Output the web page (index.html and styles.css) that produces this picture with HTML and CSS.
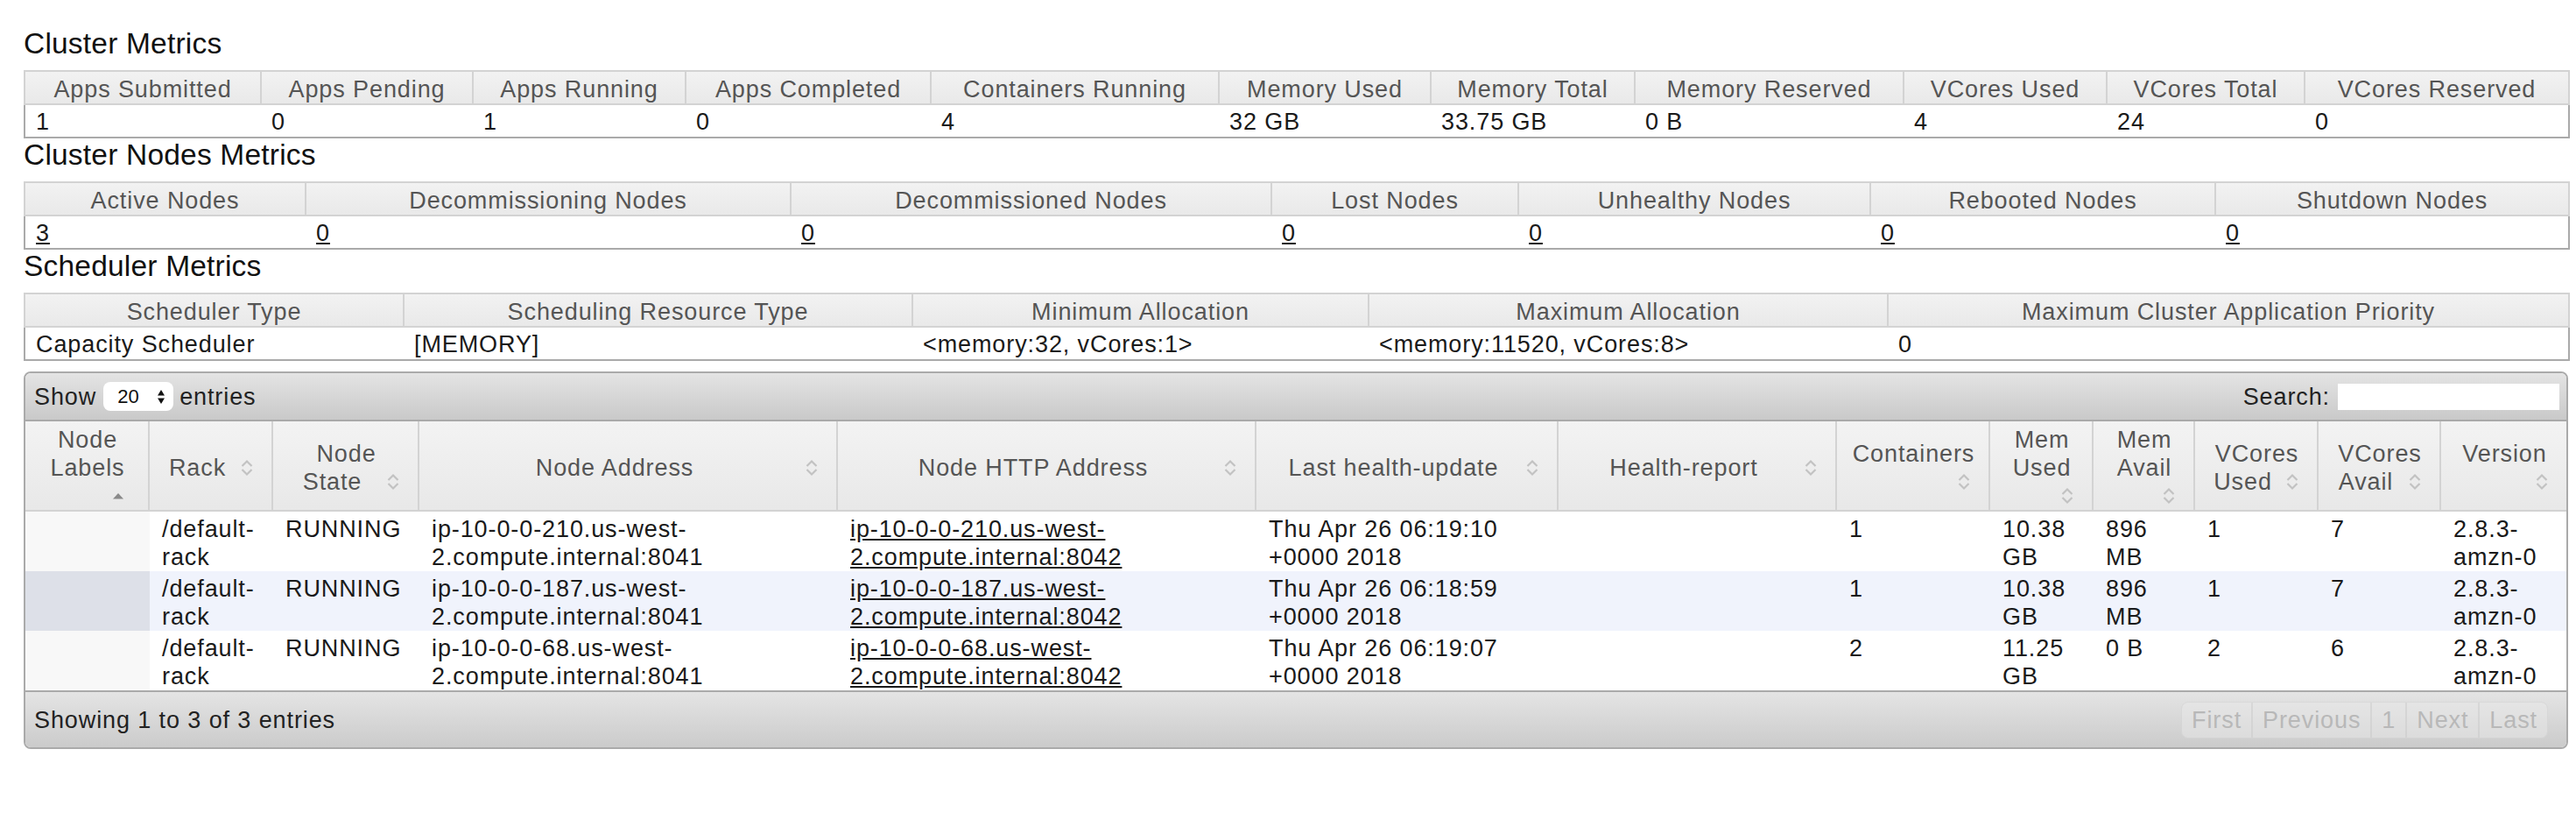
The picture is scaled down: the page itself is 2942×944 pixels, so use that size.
FILE: index.html
```html
<!DOCTYPE html>
<html lang="en">
<head>
<meta charset="utf-8">
<title>Nodes of the cluster</title>
<link rel="stylesheet" href="styles.css">
</head>
<body>
<svg class="defs" width="0" height="0" aria-hidden="true">
  <symbol id="sb" viewBox="0 0 32 32">
    <polyline points="10.5,14 16,8.5 21.5,14" fill="none" stroke="#c2c2c2" stroke-width="2.2"/>
    <polyline points="10.5,18 16,23.5 21.5,18" fill="none" stroke="#c2c2c2" stroke-width="2.2"/>
  </symbol>
  <symbol id="sa" viewBox="0 0 32 32">
    <polygon points="4,19.5 10,13 16,19.5" fill="#8a8a8a"/>
  </symbol>
  <symbol id="ud" viewBox="0 0 10 18">
    <polygon points="1,7.5 5,1 9,7.5" fill="#111"/>
    <polygon points="1,10.5 5,17 9,10.5" fill="#111"/>
  </symbol>
</svg>
<div class="page">
  <h2 class="section">Cluster Metrics</h2>
  <table class="info t1">
    <colgroup><col><col><col><col><col><col><col><col><col><col><col></colgroup>
    <thead>
      <tr><th>Apps Submitted</th><th>Apps Pending</th><th>Apps Running</th><th>Apps Completed</th><th>Containers Running</th><th>Memory Used</th><th>Memory Total</th><th>Memory Reserved</th><th>VCores Used</th><th>VCores Total</th><th>VCores Reserved</th></tr>
    </thead>
    <tbody>
      <tr><td>1</td><td>0</td><td>1</td><td>0</td><td>4</td><td>32 GB</td><td>33.75 GB</td><td>0 B</td><td>4</td><td>24</td><td>0</td></tr>
    </tbody>
  </table>

  <h2 class="section">Cluster Nodes Metrics</h2>
  <table class="info t2">
    <colgroup><col><col><col><col><col><col><col></colgroup>
    <thead>
      <tr><th>Active Nodes</th><th>Decommissioning Nodes</th><th>Decommissioned Nodes</th><th>Lost Nodes</th><th>Unhealthy Nodes</th><th>Rebooted Nodes</th><th>Shutdown Nodes</th></tr>
    </thead>
    <tbody>
      <tr><td><a href="#">3</a></td><td><a href="#">0</a></td><td><a href="#">0</a></td><td><a href="#">0</a></td><td><a href="#">0</a></td><td><a href="#">0</a></td><td><a href="#">0</a></td></tr>
    </tbody>
  </table>

  <h2 class="section">Scheduler Metrics</h2>
  <table class="info t3">
    <colgroup><col><col><col><col><col></colgroup>
    <thead>
      <tr><th>Scheduler Type</th><th>Scheduling Resource Type</th><th>Minimum Allocation</th><th>Maximum Allocation</th><th>Maximum Cluster Application Priority</th></tr>
    </thead>
    <tbody>
      <tr><td>Capacity Scheduler</td><td>[MEMORY]</td><td>&lt;memory:32, vCores:1&gt;</td><td>&lt;memory:11520, vCores:8&gt;</td><td>0</td></tr>
    </tbody>
  </table>

  <div class="dtw">
    <div class="dt-top">
      <div class="len">Show<span class="lenbox"><select aria-label="entries"><option>20</option></select><svg class="ud"><use href="#ud"/></svg></span>entries</div>
      <div class="search">Search:<input type="text" aria-label="Search"></div>
    </div>
    <table class="dt">
      <colgroup><col><col><col><col><col><col><col><col><col><col><col><col><col></colgroup>
      <thead>
        <tr>
          <th>Node<br>Labels<svg class="sort blk"><use href="#sa"/></svg></th>
          <th>Rack<svg class="sort"><use href="#sb"/></svg></th>
          <th>Node<br>State<svg class="sort"><use href="#sb"/></svg></th>
          <th>Node Address<svg class="sort"><use href="#sb"/></svg></th>
          <th>Node HTTP Address<svg class="sort"><use href="#sb"/></svg></th>
          <th>Last health-update<svg class="sort"><use href="#sb"/></svg></th>
          <th>Health-report<svg class="sort"><use href="#sb"/></svg></th>
          <th>Containers<svg class="sort blk"><use href="#sb"/></svg></th>
          <th>Mem<br>Used<svg class="sort blk"><use href="#sb"/></svg></th>
          <th>Mem<br>Avail<svg class="sort blk"><use href="#sb"/></svg></th>
          <th>VCores<br>Used<svg class="sort"><use href="#sb"/></svg></th>
          <th>VCores<br>Avail<svg class="sort"><use href="#sb"/></svg></th>
          <th>Version<svg class="sort blk"><use href="#sb"/></svg></th>
        </tr>
      </thead>
      <tbody>
        <tr class="odd">
          <td class="s1"></td><td>/default-<br>rack</td><td>RUNNING</td>
          <td>ip-10-0-0-210.us-west-<br>2.compute.internal:8041</td>
          <td><a href="#">ip-10-0-0-210.us-west-<br>2.compute.internal:8042</a></td>
          <td>Thu Apr 26 06:19:10<br>+0000 2018</td><td></td>
          <td>1</td><td>10.38<br>GB</td><td>896<br>MB</td><td>1</td><td>7</td><td>2.8.3-<br>amzn-0</td>
        </tr>
        <tr class="even">
          <td class="s1"></td><td>/default-<br>rack</td><td>RUNNING</td>
          <td>ip-10-0-0-187.us-west-<br>2.compute.internal:8041</td>
          <td><a href="#">ip-10-0-0-187.us-west-<br>2.compute.internal:8042</a></td>
          <td>Thu Apr 26 06:18:59<br>+0000 2018</td><td></td>
          <td>1</td><td>10.38<br>GB</td><td>896<br>MB</td><td>1</td><td>7</td><td>2.8.3-<br>amzn-0</td>
        </tr>
        <tr class="odd">
          <td class="s1"></td><td>/default-<br>rack</td><td>RUNNING</td>
          <td>ip-10-0-0-68.us-west-<br>2.compute.internal:8041</td>
          <td><a href="#">ip-10-0-0-68.us-west-<br>2.compute.internal:8042</a></td>
          <td>Thu Apr 26 06:19:07<br>+0000 2018</td><td></td>
          <td>2</td><td>11.25<br>GB</td><td>0 B</td><td>2</td><td>6</td><td>2.8.3-<br>amzn-0</td>
        </tr>
      </tbody>
    </table>
    <div class="dt-bot">
      <div class="info-text">Showing 1 to 3 of 3 entries</div>
      <div class="pg"><span>First</span><span>Previous</span><span>1</span><span>Next</span><span>Last</span></div>
    </div>
  </div>
</div>
</body>
</html>
```
FILE: styles.css
```css
* { box-sizing: border-box; }
html, body { margin: 0; padding: 0; background: #fff; }
body {
  font-family: "Liberation Sans", Arial, Helvetica, sans-serif;
  font-size: 27px;
  letter-spacing: 0.9px;
  line-height: 32px;
  color: #1a1a1a;
}
.defs { position: absolute; width: 0; height: 0; overflow: hidden; }
.page { padding: 31px 9px 0 27px; }
.section {
  font-size: 33.5px;
  letter-spacing: 0.2px;
  line-height: 38px;
  font-weight: normal;
  color: #111;
  margin: 0 0 11px;
}
a { color: inherit; text-decoration: underline; }

/* metric tables */
.info {
  width: 100%;
  table-layout: fixed;
  border-collapse: collapse;
  border: 2px solid #aaa;
}
.info th {
  font-weight: normal;
  color: #555;
  text-align: center;
  white-space: nowrap;
  padding: 4px 12px 0;
  border: 2px solid #d3d3d3;
  background: linear-gradient(#f2f2f2, #e9e9e9);
}
.info td {
  text-align: left;
  white-space: nowrap;
  padding: 3px 12px 1px;
}
.t1 col:nth-child(1) { width: 270px; }
.t1 col:nth-child(2) { width: 242px; }
.t1 col:nth-child(3) { width: 243px; }
.t1 col:nth-child(4) { width: 280px; }
.t1 col:nth-child(5) { width: 329px; }
.t1 col:nth-child(6) { width: 242px; }
.t1 col:nth-child(7) { width: 233px; }
.t1 col:nth-child(8) { width: 307px; }
.t1 col:nth-child(9) { width: 232px; }
.t1 col:nth-child(10) { width: 226px; }
.t1 col:nth-child(11) { width: 302px; }

.t2 col:nth-child(1) { width: 321px; }
.t2 col:nth-child(2) { width: 554px; }
.t2 col:nth-child(3) { width: 549px; }
.t2 col:nth-child(4) { width: 282px; }
.t2 col:nth-child(5) { width: 402px; }
.t2 col:nth-child(6) { width: 394px; }
.t2 col:nth-child(7) { width: 404px; }

.t3 col:nth-child(1) { width: 433px; }
.t3 col:nth-child(2) { width: 581px; }
.t3 col:nth-child(3) { width: 521px; }
.t3 col:nth-child(4) { width: 593px; }
.t3 col:nth-child(5) { width: 778px; }

/* data table wrapper */
.dtw {
  margin-top: 12px;
  border: 2px solid #aaa;
  border-radius: 8px;
  overflow: hidden;
}
.dt-top {
  height: 55px;
  border-bottom: 2px solid #aaa;
  background: linear-gradient(#e4e4e4, #c9c9c9);
  display: flex;
  align-items: center;
  justify-content: space-between;
  padding: 0 8px 0 10px;
  color: #222;
}
.len { display: flex; align-items: center; }
.lenbox {
  display: inline-flex;
  align-items: center;
  justify-content: space-between;
  width: 80px;
  height: 33px;
  background: #fff;
  border-radius: 8px;
  margin: 0 7px 0 8px;
  padding: 0 9px 0 16px;
}
.lenbox select {
  appearance: none;
  -webkit-appearance: none;
  border: 0;
  background: transparent;
  font-family: "Liberation Sans", Arial, sans-serif;
  font-size: 22px;
  color: #111;
  padding: 0;
  margin: 0;
  width: 30px;
  outline: none;
}
.ud { width: 10px; height: 18px; display: block; }
.search { display: flex; align-items: center; }
.search input {
  width: 253px;
  height: 30px;
  margin-left: 9px;
  border: 0;
  background: #fff;
  padding: 0 6px;
  font: 22px "Liberation Sans", Arial, sans-serif;
}

.dt {
  width: 100%;
  table-layout: fixed;
  border-collapse: separate;
  border-spacing: 0;
}
.dt col:nth-child(1) { width: 142px; }
.dt col:nth-child(2) { width: 141px; }
.dt col:nth-child(3) { width: 167px; }
.dt col:nth-child(4) { width: 478px; }
.dt col:nth-child(5) { width: 478px; }
.dt col:nth-child(6) { width: 345px; }
.dt col:nth-child(7) { width: 318px; }
.dt col:nth-child(8) { width: 175px; }
.dt col:nth-child(9) { width: 118px; }
.dt col:nth-child(10) { width: 116px; }
.dt col:nth-child(11) { width: 141px; }
.dt col:nth-child(12) { width: 140px; }
.dt col:nth-child(13) { width: 143px; }
.dt th {
  font-weight: normal;
  color: #555;
  text-align: center;
  vertical-align: middle;
  white-space: nowrap;
  line-height: 32px;
  padding: 5px 12px 0 14px;
  border-right: 2px solid #d3d3d3;
  border-bottom: 2px solid #d3d3d3;
  background: linear-gradient(#f3f3f3, #e8e8e8);
}
.dt th:last-child { border-right: 0; }
.sort { float: right; width: 32px; height: 32px; }
.sort.blk { float: none; display: block; margin-left: auto; }
.dt td {
  vertical-align: top;
  text-align: left;
  white-space: nowrap;
  line-height: 31.5px;
  padding: 5px 14px 0;
}
.dt tr.odd td { background: #fff; }
.dt tr.odd td.s1 { background: #f8f8f8; }
.dt tr.even td { background: #f0f3fc; }
.dt tr.even td.s1 { background: #dde0e8; }

.dt-bot {
  height: 65px;
  border-top: 2px solid #aaa;
  background: linear-gradient(#e4e4e4, #cbcbcb);
  display: flex;
  align-items: center;
  justify-content: space-between;
  padding: 0 21px 0 10px;
  color: #222;
}
.pg {
  display: flex;
  border-radius: 8px;
  overflow: hidden;
  background: rgba(236, 236, 236, 0.45);
  border: 1px solid rgba(195, 195, 195, 0.35);
}
.pg span {
  padding: 4px 11px;
  line-height: 32px;
  color: #b8b8b8;
  border-left: 2px solid rgba(195, 195, 195, 0.4);
}
.pg span:first-child { border-left: 0; }
```
